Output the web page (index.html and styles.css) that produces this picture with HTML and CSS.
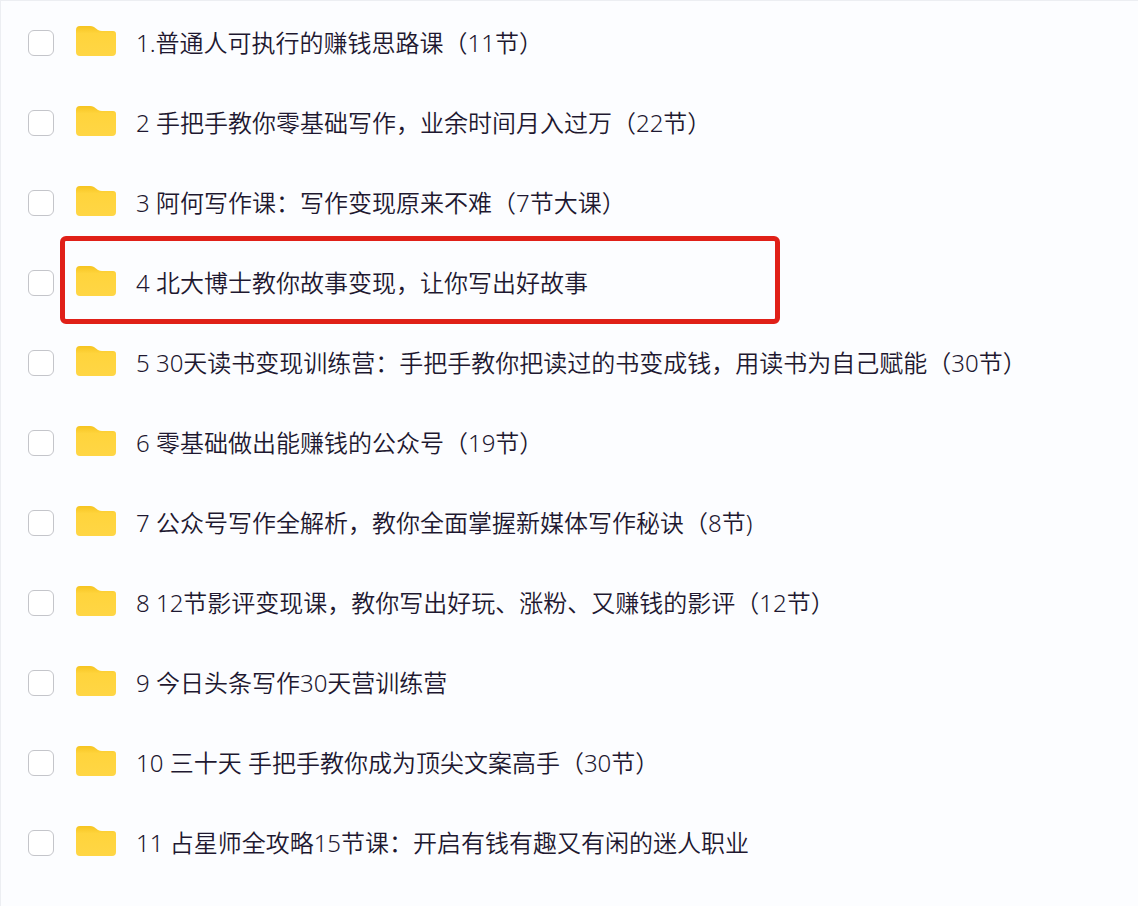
FILE: index.html
```html
<!DOCTYPE html>
<html lang="zh-CN">
<head>
  <meta charset="UTF-8" />
  <meta name="viewport" content="width=device-width, initial-scale=1" />
  <title>课程目录</title>
  <link rel="stylesheet" href="styles.css">
</head>
<body>

  <!-- 文件夹图标 -->
  <svg class="sprite" aria-hidden="true">
    <defs>
      <linearGradient id="tab" x1="0" y1="0" x2="0" y2="1">
        <stop offset="0" stop-color="#f6c421" />
        <stop offset="0.25" stop-color="#ffd43c" />
        <stop offset="1" stop-color="#ffd645" />
      </linearGradient>
    </defs>
    <symbol id="folder" viewBox="0 0 40 34">
      <path fill="url(#tab)" d="M0 4q0-4 4-4h10q2 0 4 1l4 3q2 1 4 1h11q3 0 3 3v18q0 4-4 4H4q-4 0-4-4z" />
    </symbol>
  </svg>

  <ul class="file-list">
    <li class="file-row">
      <input type="checkbox" id="f1">
      <label class="file-name" for="f1"><svg class="folder"><use href="#folder" /></svg>1.普通人可执行的赚钱思路课（11节）</label>
    </li>
    <li class="file-row">
      <input type="checkbox" id="f2">
      <label class="file-name" for="f2"><svg class="folder"><use href="#folder" /></svg>2 手把手教你零基础写作，业余时间月入过万（22节）</label>
    </li>
    <li class="file-row">
      <input type="checkbox" id="f3">
      <label class="file-name" for="f3"><svg class="folder"><use href="#folder" /></svg>3 阿何写作课：写作变现原来不难（7节大课）</label>
    </li>
    <li class="file-row marked">
      <input type="checkbox" id="f4">
      <label class="file-name" for="f4"><svg class="folder"><use href="#folder" /></svg>4 北大博士教你故事变现，让你写出好故事</label>
    </li>
    <li class="file-row">
      <input type="checkbox" id="f5">
      <label class="file-name" for="f5"><svg class="folder"><use href="#folder" /></svg>5 30天读书变现训练营：手把手教你把读过的书变成钱，用读书为自己赋能（30节）</label>
    </li>
    <li class="file-row">
      <input type="checkbox" id="f6">
      <label class="file-name" for="f6"><svg class="folder"><use href="#folder" /></svg>6 零基础做出能赚钱的公众号（19节）</label>
    </li>
    <li class="file-row">
      <input type="checkbox" id="f7">
      <label class="file-name" for="f7"><svg class="folder"><use href="#folder" /></svg>7 公众号写作全解析，教你全面掌握新媒体写作秘诀（8节)</label>
    </li>
    <li class="file-row">
      <input type="checkbox" id="f8">
      <label class="file-name" for="f8"><svg class="folder"><use href="#folder" /></svg>8 12节影评变现课，教你写出好玩、涨粉、又赚钱的影评（12节）</label>
    </li>
    <li class="file-row">
      <input type="checkbox" id="f9">
      <label class="file-name" for="f9"><svg class="folder"><use href="#folder" /></svg>9 今日头条写作30天营训练营</label>
    </li>
    <li class="file-row">
      <input type="checkbox" id="f10">
      <label class="file-name" for="f10"><svg class="folder"><use href="#folder" /></svg>10 三十天 手把手教你成为顶尖文案高手（30节）</label>
    </li>
    <li class="file-row">
      <input type="checkbox" id="f11">
      <label class="file-name" for="f11"><svg class="folder"><use href="#folder" /></svg>11 占星师全攻略15节课：开启有钱有趣又有闲的迷人职业</label>
    </li>
  </ul>

</body>
</html>
```
FILE: styles.css
```css
body {
  font-family: "Noto Sans", "Noto Sans CJK SC", sans-serif;
  font-size: 24px;
  font-weight: 350;
  line-height: 32px;
  background-color: #fcfdff;
  color: #1e1830;
  margin: 0;
}

.sprite {
  position: absolute;
  width: 0;
  height: 0;
}

.file-list {
  box-sizing: border-box;
  min-height: 100vh;
  list-style: none;
  margin: 0;
  padding: 2px 27px;
  border-top: 1px solid #eceef2;
  border-left: 1px solid #eceef2;
}

.file-row {
  position: relative;
  display: flex;
  align-items: center;
  height: 80px;
}

.file-row input {
  appearance: none;
  flex: none;
  box-sizing: border-box;
  width: 26px;
  height: 26px;
  margin: 0 22px 0 0;
  border: 1px solid #c4c5ca;
  border-radius: 6px;
  background: #fff;
}

.file-row input:checked {
  background: #ffd644;
}

.file-name {
  display: flex;
  align-items: center;
  white-space: nowrap;
}

/* 红框标记 */
.marked::after {
  content: "";
  position: absolute;
  top: -7px;
  left: 32px;
  box-sizing: border-box;
  width: 720px;
  height: 88px;
  border: 5px solid #e02018;
  border-radius: 6px;
  pointer-events: none;
}

.folder {
  flex: none;
  width: 40px;
  height: 34px;
  margin-right: 20px;
}
```
